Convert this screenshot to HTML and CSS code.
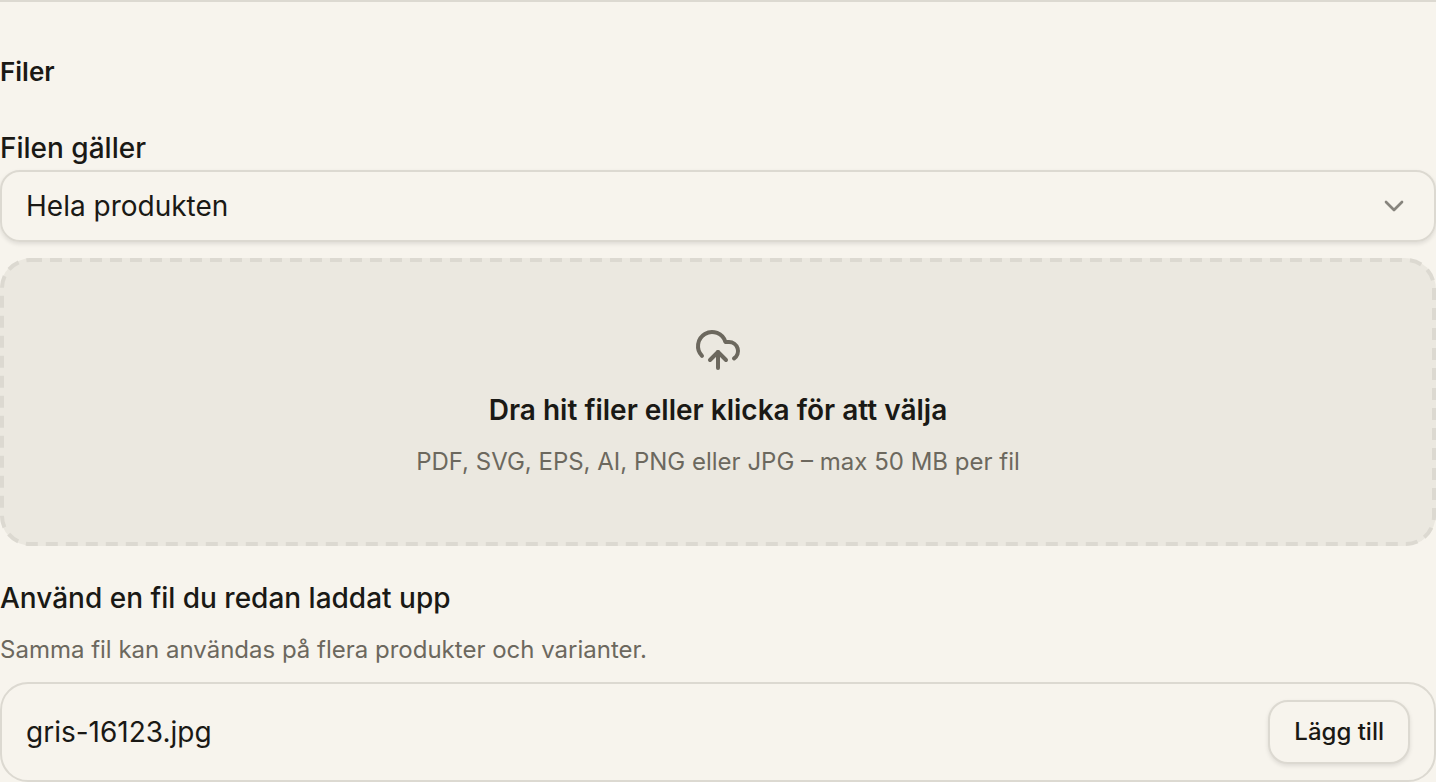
FILE: index.html
```
<!DOCTYPE html>
<html lang="sv">
<head>
  <meta charset="UTF-8" />
  <meta name="viewport" content="width=device-width, initial-scale=1.0" />
  <title>Filer</title>
  <link rel="stylesheet" href="styles.css">
</head>
<body>
  <section class="files">
    <h2 class="files-title">Filer</h2>

    <!-- What the file belongs to -->
    <label class="label" for="fileScope">Filen gäller</label>
    <div class="select-wrap">
      <select id="fileScope" class="select">
        <option>Hela produkten</option>
      </select>
      <svg class="chevron" viewBox="0 0 24 24" aria-hidden="true"><path d="m6 9 6 6 6-6" /></svg>
    </div>

    <!-- Drop zone -->
    <button type="button" class="dropzone">
      <svg class="dropzone-border" aria-hidden="true"><rect x="2" y="2" rx="28" /></svg>
      <svg class="cloud" viewBox="0 0 24 24" aria-hidden="true">
        <path d="M12 13v8" />
        <path d="M4 14.899A7 7 0 1 1 15.71 8h1.79a4.5 4.5 0 0 1 2.5 8.242" />
        <path d="m8 17 4-4 4 4" />
      </svg>
      <span class="dropzone-title">Dra hit filer eller klicka för att välja</span>
      <span class="hint">PDF, SVG, EPS, AI, PNG eller JPG – max 50 MB per fil</span>
    </button>

    <!-- Earlier uploads -->
    <h3 class="label">Använd en fil du redan laddat upp</h3>
    <p class="hint list-hint">Samma fil kan användas på flera produkter och varianter.</p>
    <ul class="file-list">
      <li class="file-row">
        <span class="file-name">gris-16123.jpg</span>
        <button type="button" class="add-button">Lägg till</button>
      </li>
    </ul>
  </section>
</body>
</html>
```
FILE: styles.css
```
* {
  box-sizing: border-box;
}
body {
  margin: 0;
  font-family: Inter, "Liberation Sans", sans-serif;
  font-size: 28px;
  line-height: 40px;
  color: #1a1915;
  background-color: #f7f4ed;
}
button, select {
  font: inherit;
  color: inherit;
  cursor: pointer;
}
.files {
  display: flex;
  flex-direction: column;
  border-top: 2px solid #dcd9d1;
  padding-top: 50px;
}
.files-title {
  margin: 0 0 36px;
  font-size: 26px;
  font-weight: 600;
}
.label {
  margin: 0;
  font-size: 28px;
  font-weight: 500;
}
.select-wrap {
  position: relative;
  margin: 2px 0 16px;
}
.select {
  display: block;
  appearance: none;
  width: 100%;
  height: 72px;
  padding: 0 72px 0 24px;
  border: 2px solid #dcd9d1;
  border-radius: 20px;
  background-color: transparent;
  box-shadow: 0 2px 4px rgba(0, 0, 0, 0.1);
}
.chevron {
  position: absolute;
  top: 20px;
  right: 26px;
  width: 32px;
  height: 32px;
  fill: none;
  stroke: #87847d;
  stroke-width: 2;
  stroke-linecap: round;
  stroke-linejoin: round;
  pointer-events: none;
}
.dropzone {
  position: relative;
  display: flex;
  flex-direction: column;
  align-items: center;
  margin-bottom: 32px;
  padding: 68px 48px 64px;
  border: none;
  border-radius: 32px;
  background-color: #ebe8e0;
}
/* long dashes that border-style: dashed cannot give */
.dropzone-border {
  position: absolute;
  inset: 0;
  width: 100%;
  height: 100%;
}
.dropzone-border rect {
  width: calc(100% - 4px);
  height: calc(100% - 4px);
  fill: none;
  stroke: #dcd9d1;
  stroke-width: 4;
  stroke-dasharray: 12 8;
}
.cloud {
  width: 48px;
  height: 48px;
  margin-bottom: 16px;
  fill: none;
  stroke: #6c685e;
  stroke-width: 2;
  stroke-linecap: round;
  stroke-linejoin: round;
}
.dropzone-title {
  margin-bottom: 12px;
  font-weight: 600;
}
.hint {
  margin: 0;
  font-size: 24px;
  color: #6c685e;
}
.list-hint {
  margin-top: 12px;
}
.file-list {
  margin: 12px 0 0;
  padding: 0;
  list-style: none;
}
.file-row {
  display: flex;
  align-items: center;
  justify-content: space-between;
  padding: 16px 24px;
  border: 2px solid #dcd9d1;
  border-radius: 28px;
}
.add-button {
  height: 64px;
  padding: 0 24px;
  border: 2px solid #dcd9d1;
  border-radius: 20px;
  background-color: #f7f4ed;
  box-shadow: 0 2px 4px rgba(0, 0, 0, 0.1);
  font-size: 24px;
  font-weight: 500;
}
```
